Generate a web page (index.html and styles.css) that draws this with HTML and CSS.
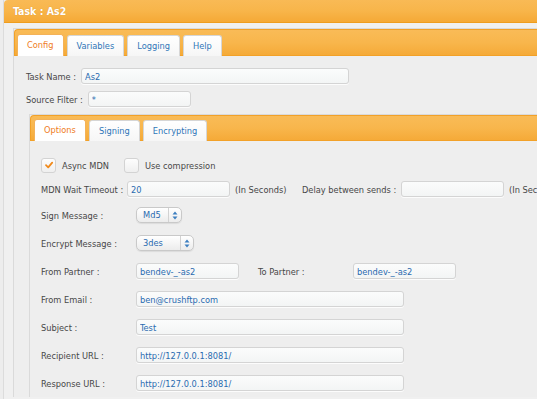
FILE: index.html
```html
<!DOCTYPE html>
<html lang="en">
<head>
  <meta charset="UTF-8">
  <title>Task : As2</title>
  <link rel="stylesheet" href="styles.css">
</head>
<body>
  <div class="window">
    <div class="win-title">Task : As2</div>
    <div class="win-body">

      <div class="tabs outer">
        <ul class="tab-nav">
          <li class="tab active">Config</li>
          <li class="tab">Variables</li>
          <li class="tab">Logging</li>
          <li class="tab">Help</li>
        </ul>
        <div class="tab-panel outer-panel">
          <div class="row">
            <label class="lbl-short">Task Name :</label>
            <input class="field w-task" type="text" value="As2">
          </div>
          <div class="row">
            <label class="lbl-short">Source Filter :</label>
            <input class="field w-filter" type="text" value="*">
          </div>

          <div class="tabs inner">
            <ul class="tab-nav">
              <li class="tab active">Options</li>
              <li class="tab">Signing</li>
              <li class="tab">Encrypting</li>
            </ul>
            <div class="tab-panel inner-panel">
              <div class="line check-line">
                <span class="check checked">
                  <svg width="10" height="10" viewBox="0 0 10 10"><path d="M2 5.2 L4.2 7.3 L8.2 2.6" fill="none" stroke="#f08a1c" stroke-width="1.8" stroke-linecap="round" stroke-linejoin="round"/></svg>
                </span>
                <span class="check-text">Async MDN</span>
                <span class="check"></span>
                <span class="check-text">Use compression</span>
              </div>

              <div class="line mdn-line">
                <label class="lbl-mdn">MDN Wait Timeout :</label>
                <input class="field w-small" type="text" value="20">
                <span class="unit unit-wide">(In Seconds)</span>
                <label class="lbl-delay">Delay between sends :</label>
                <input class="field w-small" type="text" value="">
                <span class="unit">(In Seconds)</span>
              </div>

              <div class="line">
                <label class="lbl">Sign Message :</label>
                <div class="select w-md5">
                  <span class="select-text">Md5</span>
                  <span class="select-arrows">
                    <svg width="6" height="9" viewBox="0 0 6 9"><path d="M3 0.5 L5.5 3.5 L0.5 3.5 Z M3 8.5 L5.5 5.5 L0.5 5.5 Z" fill="#3d7fc0"/></svg>
                  </span>
                </div>
              </div>

              <div class="line">
                <label class="lbl">Encrypt Message :</label>
                <div class="select w-3des">
                  <span class="select-text">3des</span>
                  <span class="select-arrows">
                    <svg width="6" height="9" viewBox="0 0 6 9"><path d="M3 0.5 L5.5 3.5 L0.5 3.5 Z M3 8.5 L5.5 5.5 L0.5 5.5 Z" fill="#3d7fc0"/></svg>
                  </span>
                </div>
              </div>

              <div class="line">
                <label class="lbl">From Partner :</label>
                <input class="field w-small" type="text" value="bendev-_-as2">
                <label class="lbl lbl-to">To Partner :</label>
                <input class="field w-small" type="text" value="bendev-_-as2">
              </div>

              <div class="line">
                <label class="lbl">From Email :</label>
                <input class="field w-long" type="text" value="ben@crushftp.com">
              </div>

              <div class="line">
                <label class="lbl">Subject :</label>
                <input class="field w-long" type="text" value="Test">
              </div>

              <div class="line">
                <label class="lbl">Recipient URL :</label>
                <input class="field w-long" type="text" value="http://127.0.0.1:8081/">
              </div>

              <div class="line">
                <label class="lbl">Response URL :</label>
                <input class="field w-long" type="text" value="http://127.0.0.1:8081/">
              </div>
            </div>
          </div>
        </div>
      </div>

    </div>
  </div>
</body>
</html>
```

FILE: styles.css
```css
html, body {
  margin: 0;
  padding: 0;
  background: #ededed;
  overflow: hidden;
  height: 399px;
}

body {
  font-family: "DejaVu Sans Condensed", "DejaVu Sans", sans-serif;
  font-stretch: condensed;
  font-size: 9.2px;
  color: #474747;
}

.window {
  margin-left: 3px;
  width: 640px;
  border-left: 1px solid #dcdcdc;
}

.win-title {
  height: 22px;
  line-height: 23px;
  padding-left: 9px;
  background: linear-gradient(#f9ba55, #f8b54a 50%, #f5a936);
  border-bottom: 1px solid #ef9d1e;
  border-top-left-radius: 4px;
  color: #fff;
  font-weight: bold;
  font-size: 10.5px;
  text-shadow: 0 0 1px rgba(160, 90, 0, 0.4);
}

.win-body {
  background: #f0f0f0;
  padding: 5px 0 0 9px;
  height: 380px;
}

.tabs {
  border-top: 1px solid #dadada;
  border-left: 1px solid #dadada;
  background: #eeeeee;
}

.tab-nav {
  list-style: none;
  margin: 0;
  display: flex;
  align-items: flex-end;
  gap: 3px;
  background: linear-gradient(#f9bb57, #f8b64c 50%, #f5aa38);
  border: 1px solid #f2a128;
  border-right: none;
  border-top-left-radius: 4px;
}

.outer > .tab-nav {
  height: 21px;
  padding: 4px 0 0 2px;
}

.inner > .tab-nav {
  height: 21px;
  padding: 3px 0 0 3px;
}

.tab {
  height: 20px;
  line-height: 20px;
  padding: 0 9px;
  margin-bottom: -1px;
  background: linear-gradient(#ffffff, #f6f6f6);
  border: 1px solid #d6d6d6;
  border-bottom: none;
  border-radius: 3px 3px 0 0;
  color: #2f76b8;
}

.tab.active {
  height: 21px;
  background: #ffffff;
  border-color: #f3b25a;
  color: #ef7d1e;
}

.outer-panel {
  padding: 12px 0 0 12px;
}

.row {
  display: flex;
  align-items: center;
  height: 16px;
  margin-bottom: 7px;
}

.lbl-short {
  margin-right: 5px;
}

.field {
  box-sizing: border-box;
  height: 16px;
  margin: 0;
  padding: 0 3px;
  border: 1px solid #d4d4d4;
  border-radius: 3px;
  background: linear-gradient(#fbfcfc, #f3f5f5);
  box-shadow: 0 1px 0 rgba(255, 255, 255, 0.8);
  font-family: inherit;
  font-stretch: condensed;
  font-size: 9.2px;
  color: #2a6bb0;
  outline: none;
}

.w-task { width: 268px; }
.w-filter { width: 103px; }
.w-small { width: 103px; }
.w-long { width: 268px; }

.inner {
  margin: 0 0 0 3px;
}

.inner-panel {
  padding: 12px 0 0 11px;
  background: #eeeeee;
}

.line {
  display: flex;
  align-items: center;
  height: 28px;
}

.check-line,
.mdn-line {
  height: 24px;
}

.check {
  box-sizing: border-box;
  width: 15px;
  height: 15px;
  display: flex;
  align-items: center;
  justify-content: center;
  border: 1px solid #d3d3d3;
  border-radius: 3px;
  background: linear-gradient(#fdfdfd, #efefef);
}

.check-text {
  margin: 0 15px 0 6px;
}

.lbl-mdn {
  width: 86px;
  flex: none;
}

.unit {
  margin-left: 5px;
}

.unit-wide {
  width: 67px;
  flex: none;
}

.lbl-delay {
  width: 99px;
  flex: none;
}

.lbl {
  width: 95px;
  flex: none;
}

.lbl-to {
  margin-left: 19px;
}

.select {
  box-sizing: border-box;
  height: 16px;
  display: flex;
  align-items: stretch;
  border: 1px solid #c9c9c9;
  border-radius: 5px;
  background: linear-gradient(#ffffff, #ececec);
  box-shadow: 0 1px 1px rgba(0, 0, 0, 0.08);
  color: #2a6bb0;
}

.w-md5 { width: 46px; }
.w-3des { width: 58px; }

.select-text {
  flex: 1;
  line-height: 14px;
  padding-left: 6px;
}

.select-arrows {
  width: 12px;
  display: flex;
  align-items: center;
  justify-content: center;
  border-left: 1px solid #d2d2d2;
}
```
